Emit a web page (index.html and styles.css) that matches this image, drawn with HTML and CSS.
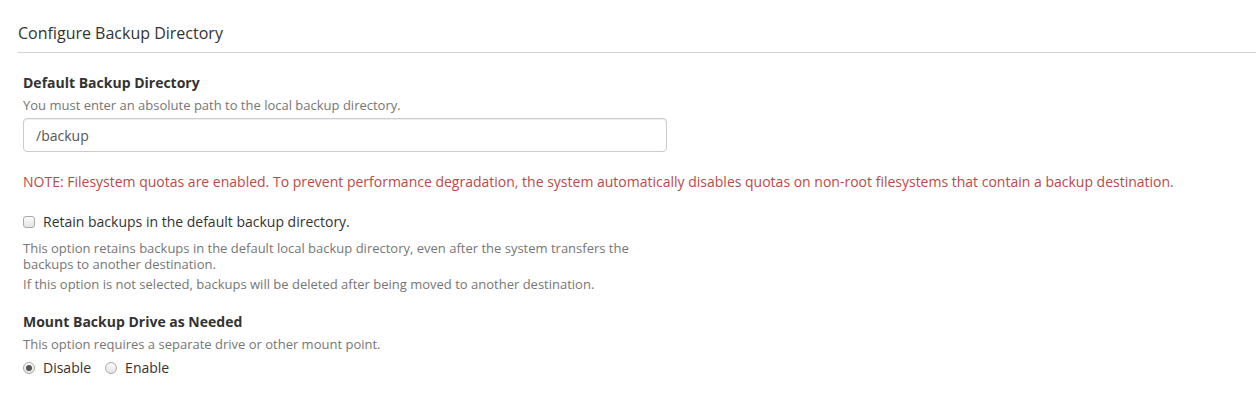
FILE: index.html
```html
<!DOCTYPE html>
<html>
<head>
<meta charset="utf-8">
<link rel="stylesheet" href="styles.css">
</head>
<body>
<div class="page">
  <h2 class="section-title">Configure Backup Directory</h2>
  <div class="content">
    <div class="field first">
      <div class="label">Default Backup Directory</div>
      <div class="help">You must enter an absolute path to the local backup directory.</div>
      <input class="text-input" type="text" value="/backup">
    </div>
    <p class="note">NOTE: Filesystem quotas are enabled. To prevent performance degradation, the system automatically disables quotas on non-root filesystems that contain a backup destination.</p>
    <label class="check-row"><input type="checkbox" class="box"><span>Retain backups in the default backup directory.</span></label>
    <div class="help-block">
      <p class="help">This option retains backups in the default local backup directory, even after the system transfers the backups to another destination.</p>
      <p class="help second">If this option is not selected, backups will be deleted after being moved to another destination.</p>
    </div>
    <div class="field mount">
      <div class="label">Mount Backup Drive as Needed</div>
      <div class="help">This option requires a separate drive or other mount point.</div>
      <div class="radios">
        <label class="radio-row"><input type="radio" name="m" class="radio" checked><span>Disable</span></label>
        <label class="radio-row"><input type="radio" name="m" class="radio"><span>Enable</span></label>
      </div>
    </div>
  </div>
</div>
</body>
</html>
```

FILE: styles.css
```css
* { box-sizing: border-box; }
html, body { margin: 0; padding: 0; background: #fff; }
body {
  font-family: "Open Sans", "Liberation Sans", sans-serif;
  font-size: 14px;
  color: #333;
}
.page { padding: 22px 0 0 18px; }
.section-title {
  margin: 0;
  font-size: 16px;
  font-weight: 400;
  line-height: 22px;
  color: #333;
  padding-bottom: 8px;
  border-bottom: 1px solid #d3d3d3;
}
.content { padding-left: 5px; }
.field { margin-top: 19px; }
.field.first { margin-top: 20px; }
.label {
  font-weight: 700;
  font-size: 14px;
  line-height: 20px;
  color: #333;
}
.help {
  margin: 4px 0 0;
  font-size: 13px;
  line-height: 16px;
  color: #767676;
}
.text-input {
  display: block;
  margin-top: 5px;
  width: 644px;
  height: 34px;
  padding: 6px 12px;
  font-family: inherit;
  font-size: 14px;
  color: #555;
  border: 1px solid #ccc;
  border-radius: 4px;
  box-shadow: inset 0 1px 1px rgba(0,0,0,0.075);
  outline: none;
}
.note {
  margin: 20px 0 0;
  line-height: 20px;
  color: #b94a48;
}
.check-row {
  display: flex;
  align-items: center;
  margin-top: 20px;
  line-height: 20px;
  gap: 8px;
}
.box, .radio {
  -webkit-appearance: none;
  appearance: none;
  margin: 0;
  width: 12px;
  height: 12px;
  border: 1px solid #a9a9a9;
  background: linear-gradient(#fdfdfd, #e3e3e3);
  flex: none;
}
.box { border-radius: 3px; }
.radio { border-radius: 50%; position: relative; }
.radio:checked::after {
  content: "";
  position: absolute;
  left: 2px; top: 2px;
  width: 6px; height: 6px;
  border-radius: 50%;
  background: #555;
}
.help-block { margin-top: 8px; max-width: 644px; }
.help-block .help { margin: 0; }
.help-block .second { margin-top: 4px; }
.mount { margin-top: 20px; }
.radios {
  display: flex;
  margin-top: 6px;
  gap: 14px;
}
.radio-row {
  display: flex;
  align-items: center;
  gap: 8px;
  line-height: 20px;
}
```
